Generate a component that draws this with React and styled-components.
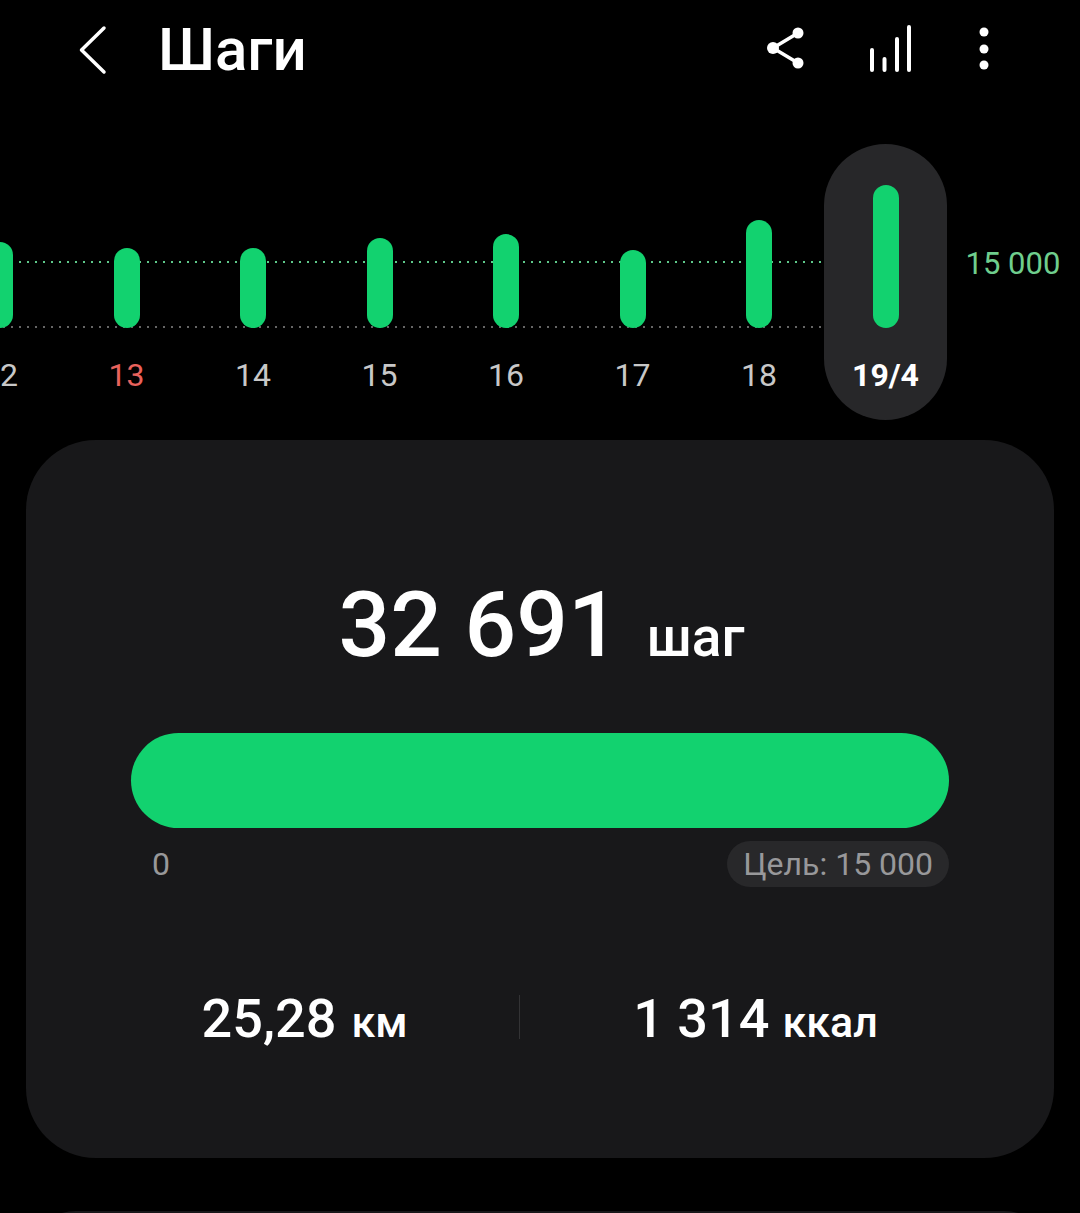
import styled, { createGlobalStyle } from "styled-components";

const GlobalStyle = createGlobalStyle`
html, body {
  margin: 0;
  padding: 0;
  background: #000;
}
* {
  box-sizing: border-box;
}
`;

const Page = styled.div`
width: 1080px;
height: 1213px;
overflow: hidden;
background: #000;
color: #fff;
font-family: Roboto, "Noto Sans", sans-serif;
`;

const Header = styled.header`
display: flex;
align-items: center;
height: 100px;
padding-left: 76px;
padding-right: 88px;
`;
const Title = styled.h1`
margin: 0 0 0 50px;
font-size: 60px;
font-weight: 500;
line-height: 100px;
`;
const Actions = styled.div`
display: flex;
align-items: center;
gap: 61.5px;
margin-left: auto;
`;
const Icon = styled.svg`
display: block;
height: 60px;
fill: #fff;
stroke: #fff;
`;

const Chart = styled.section`
position: relative;
display: flex;
gap: 3.5px;
height: 276px;
margin: 44px 0 0 -61.5px;
`;
const GoalLine = styled.div`
position: absolute;
top: 117px;
left: 0;
width: 882px;
height: 2px;
background-image: linear-gradient(90deg, #5ec98a 2px, transparent 2px);
background-size: 8px 2px;
`;
const BaseLine = styled(GoalLine)`
top: 182px;
background-image: linear-gradient(90deg, #666 2px, transparent 2px);
`;
const Day = styled.div`
position: relative;
flex: none;
display: flex;
flex-direction: column;
align-items: center;
width: 123px;
border-radius: 62px;
background: ${p => (p.$selected ? "#272729" : "transparent")};
`;
const BarSlot = styled.div`
display: flex;
align-items: flex-end;
height: 184px;
`;
const Bar = styled.div`
width: 26px;
border-radius: 13px;
background: #12d26f;
`;
const DayLabel = styled.span`
margin-top: 27px;
font-size: 32px;
line-height: 40px;
font-weight: ${p => (p.$selected ? 700 : 400)};
color: ${p => (p.$selected ? "#fff" : p.$holiday ? "#e8625c" : "#c8c8c8")};
`;
const GoalLabel = styled.span`
margin: 100px 0 0 15px;
font-size: 31px;
line-height: 40px;
font-weight: 400;
color: #6fce8d;
white-space: nowrap;
`;

const Card = styled.section`
height: 718px;
margin: 20px 26px 0;
padding: 140px 105px 0;
border-radius: 70px;
background: #18181a;
`;
const Total = styled.div`
display: flex;
justify-content: center;
align-items: baseline;
gap: 27px;
padding-left: 3px;
line-height: 90px;
`;
const TotalValue = styled.span`
font-size: 91px;
font-weight: 500;
`;
const TotalUnit = styled.span`
font-size: 55px;
font-weight: 500;
`;
const Progress = styled.div`
height: 95px;
margin-top: 51px;
border-radius: 48px;
background: #12d26f;
`;
const Legend = styled.div`
display: flex;
justify-content: space-between;
align-items: center;
height: 46px;
margin-top: 13px;
padding-left: 21px;
font-size: 32px;
color: #98989a;
`;
const GoalPill = styled.span`
padding: 0 16px;
line-height: 46px;
border-radius: 23px;
background: #28282a;
`;
const Stats = styled.div`
display: grid;
grid-template-columns: 429px 1px 1fr;
align-items: center;
height: 60px;
margin: 102px -42px 0 -41px;
`;
const Stat = styled.div`
display: flex;
justify-content: center;
align-items: baseline;
gap: ${p => p.$gap}px;
line-height: 60px;
font-weight: 500;
`;
const StatValue = styled.span`
font-size: 54px;
`;
const StatUnit = styled.span`
font-size: 43px;
`;
const Divider = styled.div`
height: 44px;
margin-bottom: 7px;
background: #333335;
`;
const NextCard = styled.section`
height: 100px;
margin: 53px 26px 0;
border-radius: 70px;
background: #18181a;
`;

const days = [
  { label: "12", height: 86 },
  { label: "13", height: 80, holiday: true },
  { label: "14", height: 80 },
  { label: "15", height: 90 },
  { label: "16", height: 94 },
  { label: "17", height: 78 },
  { label: "18", height: 108 },
  { label: "19/4", height: 143, selected: true },
];

export default function App() {
  return (
    <Page>
      <GlobalStyle />
      <Header>
        <Icon viewBox="76 20 32 60" width="32" style={{ fill: "none" }} strokeWidth="3.5" strokeLinecap="round" strokeLinejoin="round">
          <path d="M104 28 L81.5 50 L104 72" />
        </Icon>
        <Title>Шаги</Title>
        <Actions>
          <Icon viewBox="765 20 42 60" width="42" strokeWidth="3.5">
            <path d="M798 33 L773 48 L798 63" fill="none" />
            <circle cx="798" cy="33" r="5.5" stroke="none" />
            <circle cx="773" cy="48" r="6" stroke="none" />
            <circle cx="798" cy="63" r="5.5" stroke="none" />
          </Icon>
          <Icon viewBox="869 20 46 60" width="46" strokeWidth="4" strokeLinecap="round">
            <path d="M872 50 V70 M884.5 59 V70 M897 39 V70 M909 27 V70" />
          </Icon>
          <Icon viewBox="976 20 16 60" width="16" stroke="none">
            <circle cx="984" cy="32" r="4.5" stroke="none" />
            <circle cx="984" cy="49" r="4.5" stroke="none" />
            <circle cx="984" cy="65" r="4.5" stroke="none" />
          </Icon>
        </Actions>
      </Header>

      <Chart>
        <GoalLine />
        <BaseLine />
        {days.map(day => (
          <Day key={day.label} $selected={day.selected}>
            <BarSlot>
              <Bar style={{ height: day.height }} />
            </BarSlot>
            <DayLabel $selected={day.selected} $holiday={day.holiday}>{day.label}</DayLabel>
          </Day>
        ))}
        <GoalLabel>15 000</GoalLabel>
      </Chart>

      <Card>
        <Total>
          <TotalValue>32 691</TotalValue>
          <TotalUnit>шаг</TotalUnit>
        </Total>
        <Progress />
        <Legend>
          <span>0</span>
          <GoalPill>Цель: 15 000</GoalPill>
        </Legend>
        <Stats>
          <Stat $gap={15}>
            <StatValue>25,28</StatValue>
            <StatUnit>км</StatUnit>
          </Stat>
          <Divider />
          <Stat $gap={13}>
            <StatValue>1 314</StatValue>
            <StatUnit>ккал</StatUnit>
          </Stat>
        </Stats>
      </Card>
      <NextCard />
    </Page>
  );
}
